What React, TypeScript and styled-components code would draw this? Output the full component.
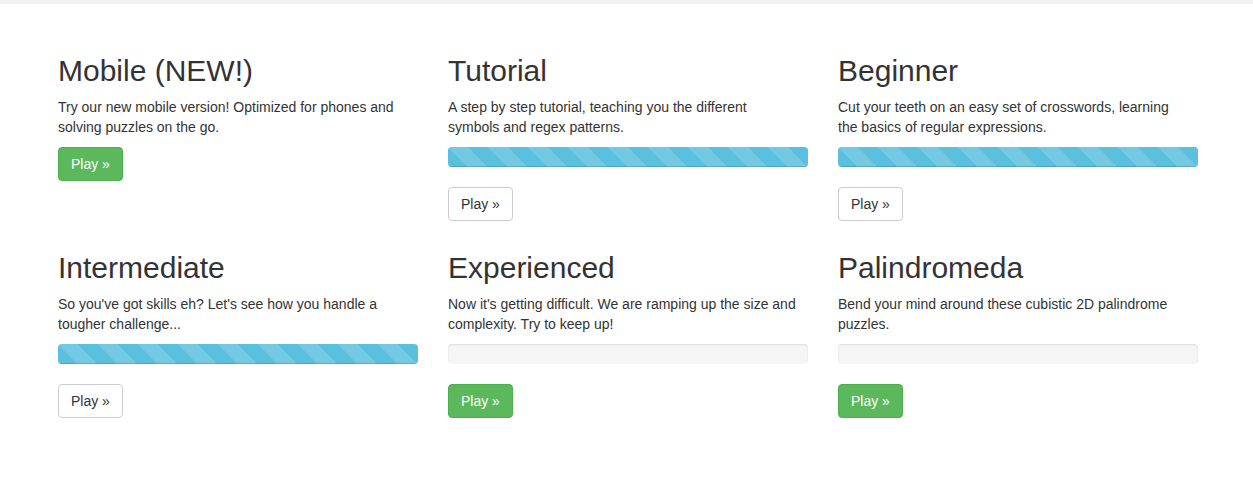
import styled, { createGlobalStyle } from 'styled-components';

const GlobalStyle = createGlobalStyle`
    html, body {
        margin: 0;
        padding: 0;
        background: #fff;
    }
    body {
        font-family: "Liberation Sans", Arial, Helvetica, sans-serif;
        font-size: 14px;
        line-height: 1.42857143;
        color: #333;
    }
    * {
        box-sizing: border-box;
    }
`;

const TopBar = styled.div`
    height: 4px;
    background: #f1f1f1;
`;

const Container = styled.div`
    width: 1170px;
    margin-left: 43px;
    padding: 30px 15px 0;
`;

const Grid = styled.div`
    display: grid;
    grid-template-columns: repeat(3, 360px);
    column-gap: 30px;
    row-gap: 10px;
    align-items: start;
`;

const Col = styled.div`
    display: flex;
    flex-direction: column;
    align-items: flex-start;
`;

const Title = styled.h2`
    margin: 20px 0 10px;
    font-size: 30px;
    font-weight: 500;
    line-height: 1.1;
    color: #333;
`;

const Text = styled.p`
    max-width: 352px;
    margin: 0 0 10px;
`;

const Progress = styled.div`
    width: 100%;
    height: 20px;
    margin-bottom: 20px;
    overflow: hidden;
    background-color: #f5f5f5;
    border-radius: 4px;
    box-shadow: inset 0 1px 2px rgba(0, 0, 0, 0.1);
`;

const Bar = styled.div`
    height: 100%;
    background-color: #5bc0de;
    background-image: linear-gradient(
        45deg,
        rgba(255, 255, 255, 0.15) 25%,
        transparent 25%,
        transparent 50%,
        rgba(255, 255, 255, 0.15) 50%,
        rgba(255, 255, 255, 0.15) 75%,
        transparent 75%,
        transparent
    );
    background-size: 40px 40px;
    box-shadow: inset 0 -1px 0 rgba(0, 0, 0, 0.15);
`;

const Button = styled.a<{ $variant: 'success' | 'default' }>`
    display: inline-block;
    padding: 6px 12px;
    font-size: 14px;
    line-height: 20px;
    border-radius: 4px;
    border: 1px solid ${p => (p.$variant === 'success' ? '#4cae4c' : '#ccc')};
    background: ${p => (p.$variant === 'success' ? '#5cb85c' : '#fff')};
    color: ${p => (p.$variant === 'success' ? '#fff' : '#333')};
    text-decoration: none;
    cursor: pointer;
`;

type Level = {
    title: string;
    text: string;
    progress: number | null;
    variant: 'success' | 'default';
};

const levels: Level[] = [
    {
        title: 'Mobile (NEW!)',
        text: 'Try our new mobile version! Optimized for phones and solving puzzles on the go.',
        progress: null,
        variant: 'success',
    },
    {
        title: 'Tutorial',
        text: 'A step by step tutorial, teaching you the different symbols and regex patterns.',
        progress: 100,
        variant: 'default',
    },
    {
        title: 'Beginner',
        text: 'Cut your teeth on an easy set of crosswords, learning the basics of regular expressions.',
        progress: 100,
        variant: 'default',
    },
    {
        title: 'Intermediate',
        text: "So you've got skills eh? Let's see how you handle a tougher challenge...",
        progress: 100,
        variant: 'default',
    },
    {
        title: 'Experienced',
        text: "Now it's getting difficult. We are ramping up the size and complexity. Try to keep up!",
        progress: 0,
        variant: 'success',
    },
    {
        title: 'Palindromeda',
        text: 'Bend your mind around these cubistic 2D palindrome puzzles.',
        progress: 0,
        variant: 'success',
    },
];

const App = () => (
    <>
        <GlobalStyle />
        <TopBar />
        <Container>
            <Grid>
                {levels.map(level => (
                    <Col key={level.title}>
                        <Title>{level.title}</Title>
                        <Text>{level.text}</Text>
                        {level.progress !== null && (
                            <Progress>
                                <Bar style={{ width: `${level.progress}%` }} />
                            </Progress>
                        )}
                        <Button $variant={level.variant}>Play &raquo;</Button>
                    </Col>
                ))}
            </Grid>
        </Container>
    </>
);

export default App;
